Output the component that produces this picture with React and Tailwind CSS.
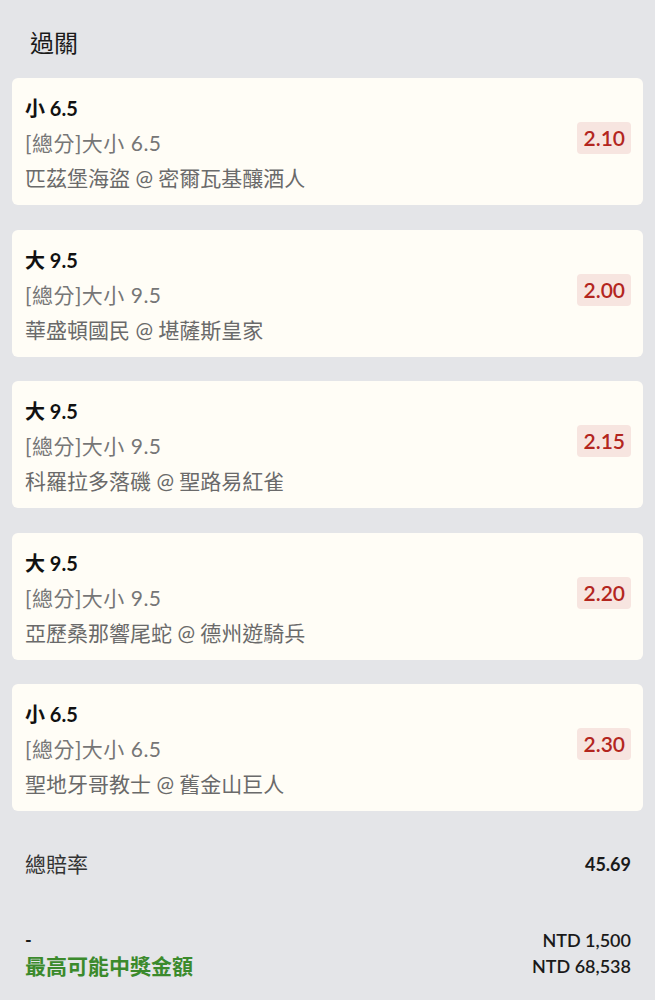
const FONT = "font-['Lato','Noto_Sans_CJK_TC',sans-serif]"

const legs = [
  { pick: '小 6.5', market: '[總分]大小 6.5', match: '匹茲堡海盜 @ 密爾瓦基釀酒人', odds: '2.10' },
  { pick: '大 9.5', market: '[總分]大小 9.5', match: '華盛頓國民 @ 堪薩斯皇家', odds: '2.00' },
  { pick: '大 9.5', market: '[總分]大小 9.5', match: '科羅拉多落磯 @ 聖路易紅雀', odds: '2.15' },
  { pick: '大 9.5', market: '[總分]大小 9.5', match: '亞歷桑那響尾蛇 @ 德州遊騎兵', odds: '2.20' },
  { pick: '小 6.5', market: '[總分]大小 6.5', match: '聖地牙哥教士 @ 舊金山巨人', odds: '2.30' },
]

function LegCard({ leg }) {
  return (
    <div className="h-[127px] rounded-[6px] bg-[#fffdf6] pl-[13px] pr-[12px] pt-[13px] flex items-start justify-between">
      <div className="flex flex-col">
        <div className="text-[20px] leading-[34px] font-bold text-[#111]">{leg.pick}</div>
        <div className="text-[21px] leading-[35px] tracking-[0.5px] text-[#767676]">{leg.market}</div>
        <div className="text-[21px] leading-[35px] text-[#6a6a6a]">{leg.match}</div>
      </div>
      <div className="mt-[31px] h-[32px] px-[6px] rounded-[4px] bg-[#f7e5e0] flex items-center text-[21px] font-semibold text-[#b3261e]">
        {leg.odds}
      </div>
    </div>
  )
}

export default function App() {
  return (
    <div className={`${FONT} min-h-[1000px] bg-[#e4e5e8] px-[12px]`}>
      <div className="pt-[28px] pl-[18px] text-[24px] leading-[30px] text-[#1a1a1a]">過關</div>
      <div className="mt-[20px] flex flex-col gap-[24.5px]">
        {legs.map((leg, i) => <LegCard key={i} leg={leg} />)}
      </div>
      <div className="mt-[38px] pl-[13px] pr-[12px] flex items-center justify-between leading-[30px]">
        <span className="text-[21px] text-[#333]">總賠率</span>
        <span className="text-[18px] font-bold text-[#1a1a1a]">45.69</span>
      </div>
      <div className="mt-[48px] pl-[13px] pr-[12px] flex justify-between">
        <div className="flex flex-col">
          <span className="text-[18px] leading-[26px] font-bold text-[#1a1a1a]">-</span>
          <span className="text-[21px] leading-[26px] font-bold text-[#3b8a2c]">最高可能中獎金額</span>
        </div>
        <div className="flex flex-col items-end">
          <span className="text-[18px] leading-[26px] font-semibold text-[#1a1a1a]">NTD 1,500</span>
          <span className="text-[18px] leading-[26px] font-semibold text-[#1a1a1a]">NTD 68,538</span>
        </div>
      </div>
    </div>
  )
}
